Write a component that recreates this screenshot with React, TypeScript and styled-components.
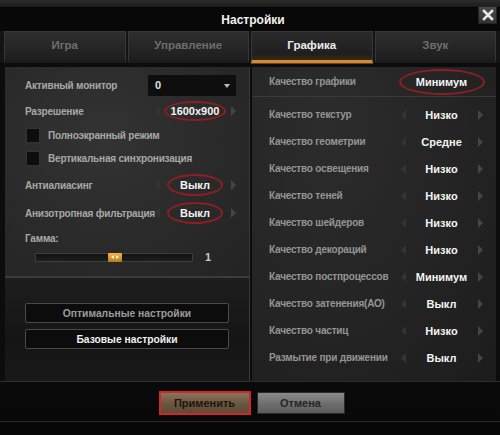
import styled, { createGlobalStyle } from 'styled-components';

const GlobalStyle = createGlobalStyle`
  html, body {
    margin: 0;
    padding: 0;
    background: #111;
  }
  * {
    box-sizing: border-box;
  }
`;

const tabs = ['Игра', 'Управление', 'Графика', 'Звук'];

const qualityRows = [
  { label: 'Качество текстур', value: 'Низко' },
  { label: 'Качество геометрии', value: 'Средне' },
  { label: 'Качество освещения', value: 'Низко' },
  { label: 'Качество теней', value: 'Низко' },
  { label: 'Качество шейдеров', value: 'Низко' },
  { label: 'Качество декораций', value: 'Низко' },
  { label: 'Качество постпроцессов', value: 'Минимум' },
  { label: 'Качество затенения(АО)', value: 'Выкл' },
  { label: 'Качество частиц', value: 'Низко' },
  { label: 'Размытие при движении', value: 'Выкл' },
];

// red marks drawn over some values (width x height of the ellipse)
type Mark = { w: number; h: number };

const Selector = ({ value, mark }: { value: string; mark?: Mark }) => (
  <ValueCell>
    <Arrow $dir="left" />
    <Value>
      {value}
      {mark && <Ring $w={mark.w} $h={mark.h} />}
    </Value>
    <Arrow $dir="right" />
  </ValueCell>
);

const App = () => {
  const gamma = 0.5;

  return (
    <>
      <GlobalStyle />
      <Window>
        <TopStrip />
        <TitleBar>
          Настройки
          <CloseButton>
            <svg width="12" height="12" viewBox="0 0 12 12">
              <path d="M2 2 L10 10 M10 2 L2 10" stroke="#e6e6e6" strokeWidth="2.6" strokeLinecap="square" />
            </svg>
          </CloseButton>
        </TitleBar>

        <TabBar>
          {tabs.map((t) => (
            <Tab key={t} $active={t === 'Графика'}>
              {t}
            </Tab>
          ))}
        </TabBar>

        <Body>
          <LeftPanel>
            <SettingsArea>
              <SettingRow>
                <Label>Активный монитор</Label>
                <Dropdown>
                  0
                  <DropArrow />
                </Dropdown>
              </SettingRow>
              <SettingRow>
                <Label>Разрешение</Label>
                <Selector value="1600x900" mark={{ w: 62, h: 20 }} />
              </SettingRow>
              <CheckRow>
                <CheckBox />
                <Label>Полноэкранный режим</Label>
              </CheckRow>
              <CheckRow>
                <CheckBox />
                <Label>Вертикальная синхронизация</Label>
              </CheckRow>
              <SettingRow $gapTop>
                <Label>Антиалиасинг</Label>
                <Selector value="Выкл" mark={{ w: 56, h: 22 }} />
              </SettingRow>
              <SettingRow $gapTop>
                <Label>Анизотропная фильтрация</Label>
                <Selector value="Выкл" mark={{ w: 56, h: 22 }} />
              </SettingRow>
              <GammaLabel>Гамма:</GammaLabel>
              <SliderRow>
                <Track>
                  <Thumb style={{ left: `${gamma * 100}%` }}>
                    <ThumbArrow $dir="left" />
                    <ThumbArrow $dir="right" />
                  </Thumb>
                </Track>
                <SliderValue>1</SliderValue>
              </SliderRow>
            </SettingsArea>
            <PresetArea>
              <PresetButton>Оптимальные настройки</PresetButton>
              <PresetButton $bright>Базовые настройки</PresetButton>
            </PresetArea>
          </LeftPanel>

          <RightPanel>
            <HeaderRow>
              <RightLabel>Качество графики</RightLabel>
              <ValueCell>
                <span />
                <Value>
                  Минимум
                  <Ring $w={86} $h={26} />
                </Value>
                <span />
              </ValueCell>
            </HeaderRow>
            <QualityList>
              {qualityRows.map((r) => (
                <QualityRow key={r.label}>
                  <RightLabel>{r.label}</RightLabel>
                  <Selector value={r.value} />
                </QualityRow>
              ))}
            </QualityList>
          </RightPanel>
        </Body>

        <Footer>
          <FooterButtons>
            <ApplyButton>Применить</ApplyButton>
            <CancelButton>Отмена</CancelButton>
          </FooterButtons>
        </Footer>
      </Window>
    </>
  );
};

export default App;

const Window = styled.div`
  width: 500px;
  height: 435px;
  display: flex;
  flex-direction: column;
  background: #0c0c0c;
  font-family: 'Liberation Sans', Arial, sans-serif;
  overflow: hidden;
`;

const TopStrip = styled.div`
  height: 8px;
  background: linear-gradient(#2e2c2a, #1c1b1a);
  border-bottom: 1px solid #050505;
`;

const TitleBar = styled.div`
  position: relative;
  height: 23px;
  display: flex;
  align-items: center;
  justify-content: center;
  padding-left: 6px;
  background: #080808;
  color: #f2f2f2;
  font-weight: 700;
  font-size: 12px;
`;

const CloseButton = styled.div`
  position: absolute;
  right: 3px;
  top: -2px;
  width: 19px;
  height: 18px;
  display: flex;
  align-items: center;
  justify-content: center;
  background: linear-gradient(#4a4a4a, #333);
  border: 1px solid #222;
`;

const TabBar = styled.div`
  display: grid;
  grid-template-columns: repeat(4, 1fr);
  gap: 2px;
  padding: 0 4px;
  height: 32px;
  background: #141414;
`;

const Tab = styled.div<{ $active?: boolean }>`
  display: flex;
  align-items: center;
  justify-content: center;
  padding-bottom: 2px;
  font-size: 11.5px;
  font-weight: 700;
  color: ${(p) => (p.$active ? '#ececec' : '#6e6e6e')};
  background: ${(p) =>
    p.$active
      ? 'linear-gradient(#2a2a2a, #1f1f1f 80%, #3a2a12 100%)'
      : 'linear-gradient(#2e2e2e, #1e1e1e)'};
  border: 1px solid #383838;
  border-bottom: 3px solid ${(p) => (p.$active ? '#d08a3a' : '#1b1b1b')};
  box-shadow: ${(p) => (p.$active ? '0 1px 0 #6b4318' : 'none')};
`;

const Body = styled.div`
  display: grid;
  grid-template-columns: 245px 1fr;
  gap: 2px;
  height: 314px;
  margin-top: 4px;
  padding: 0 4px 0 5px;
`;

const LeftPanel = styled.div`
  display: flex;
  flex-direction: column;
  border-right: 1px solid #3a3a3a;
`;

const SettingsArea = styled.div`
  height: 211px;
  display: flex;
  flex-direction: column;
  padding: 5px 0 0 20px;
  background: radial-gradient(ellipse at 40% 35%, #333 0%, #2a2a2a 55%, #232323 100%);
  border-bottom: 2px solid #3c3c3c;
`;

const SettingRow = styled.div<{ $gapTop?: boolean }>`
  height: 26px;
  margin-top: ${(p) => (p.$gapTop ? '2px' : '0')};
  display: grid;
  grid-template-columns: 128px 84px;
  align-items: center;
`;

const Label = styled.span`
  font-size: 10px;
  font-weight: 700;
  letter-spacing: -0.2px;
  color: #a8a8a8;
  white-space: nowrap;
`;

const RightLabel = styled(Label)`
  color: #959595;
`;

const Dropdown = styled.div`
  position: relative;
  height: 21px;
  width: 88px;
  margin-left: -5px;
  display: flex;
  align-items: center;
  padding-left: 7px;
  background: #0e0e0e;
  color: #e0e0e0;
  font-size: 11px;
  font-weight: 700;
`;

const DropArrow = styled.span`
  position: absolute;
  right: 6px;
  top: 9px;
  border-left: 3px solid transparent;
  border-right: 3px solid transparent;
  border-top: 4px solid #bbb;
`;

const ValueCell = styled.div`
  display: grid;
  grid-template-columns: 8px 1fr 8px;
  align-items: center;
  height: 100%;
`;

const Arrow = styled.span<{ $dir: 'left' | 'right' }>`
  justify-self: center;
  width: 0;
  height: 0;
  border-top: 5px solid transparent;
  border-bottom: 5px solid transparent;
  ${(p) =>
    p.$dir === 'left'
      ? 'border-right: 5px solid #343434;'
      : 'border-left: 5px solid #454545;'}
`;

const Value = styled.span`
  position: relative;
  display: flex;
  align-items: center;
  justify-content: center;
  height: 100%;
  font-size: 11px;
  font-weight: 700;
  color: #f4f4f4;
`;

const Ring = styled.span<{ $w: number; $h: number }>`
  position: absolute;
  left: 50%;
  top: 50%;
  width: ${(p) => p.$w}px;
  height: ${(p) => p.$h}px;
  transform: translate(-50%, -50%);
  border: 2px solid #8c1f22;
  border-radius: 50%;
`;

const CheckRow = styled.div`
  height: 23px;
  display: flex;
  align-items: center;
  gap: 8px;
  padding-left: 1px;
`;

const CheckBox = styled.span`
  width: 14px;
  height: 15px;
  background: #0d0d0d;
  border: 1px solid #333;
`;

const GammaLabel = styled(Label)`
  margin-top: 6px;
  height: 14px;
  line-height: 14px;
`;

const SliderRow = styled.div`
  height: 22px;
  display: flex;
  align-items: center;
  gap: 12px;
  padding-left: 10px;
`;

const Track = styled.div`
  position: relative;
  width: 158px;
  height: 9px;
  background: linear-gradient(#111, #1e1e1e);
  border: 1px solid #3e3e3e;
  border-radius: 1px;
`;

const Thumb = styled.div`
  position: absolute;
  top: -1px;
  width: 14px;
  height: 9px;
  margin-left: -6px;
  display: flex;
  align-items: center;
  justify-content: center;
  gap: 2px;
  background: linear-gradient(#f0b84a, #b77a1e);
  border-radius: 1px;
`;

const ThumbArrow = styled.span<{ $dir: 'left' | 'right' }>`
  width: 0;
  height: 0;
  border-top: 2px solid transparent;
  border-bottom: 2px solid transparent;
  ${(p) =>
    p.$dir === 'left' ? 'border-right: 3px solid #fff3d0;' : 'border-left: 3px solid #fff3d0;'}
`;

const SliderValue = styled.span`
  font-size: 11px;
  font-weight: 700;
  color: #c8c8c8;
`;

const PresetArea = styled.div`
  flex: 1;
  display: flex;
  flex-direction: column;
  gap: 6px;
  padding: 25px 20px 0 20px;
  background: linear-gradient(#1d1d1d, #151515 60%, #181818);
`;

const PresetButton = styled.div<{ $bright?: boolean }>`
  height: 20px;
  display: flex;
  align-items: center;
  justify-content: center;
  background: #0c0c0c;
  border: 1px solid #4a4a4a;
  border-radius: 2px;
  font-size: 10.3px;
  font-weight: 700;
  color: ${(p) => (p.$bright ? '#f0f0f0' : '#9c9c9c')};
`;

const RightPanel = styled.div`
  display: flex;
  flex-direction: column;
  padding: 0 6px 0 17px;
  background: radial-gradient(ellipse at 30% 20%, #2c2c2c 0%, #242424 55%, #1c1c1c 100%);
`;

const HeaderRow = styled.div`
  height: 30px;
  display: grid;
  grid-template-columns: 130px 85px;
  align-items: center;
  border-bottom: 1px solid #3a3a3a;
  margin-left: -17px;
  margin-right: -6px;
  padding-left: 17px;
`;

const QualityList = styled.div`
  display: flex;
  flex-direction: column;
  padding-top: 4px;
`;

const QualityRow = styled.div`
  height: 27px;
  display: grid;
  grid-template-columns: 130px 85px;
  align-items: center;
`;

const Footer = styled.div`
  flex: 1;
  display: flex;
  flex-direction: column;
  border-top: 1px solid #2e2e2e;
  background: linear-gradient(#0a0a0a, #070707);
  &::after {
    content: '';
    display: block;
    margin-top: 6px;
    height: 1px;
    background: #2c2c2c;
  }
`;

const FooterButtons = styled.div`
  display: flex;
  justify-content: center;
  align-items: center;
  gap: 6px;
  padding-top: 9px;
  padding-left: 3px;
`;

const ApplyButton = styled.div`
  width: 92px;
  height: 24px;
  display: flex;
  align-items: center;
  justify-content: center;
  background: linear-gradient(#8a735a, #6a5540 55%, #5e4a36);
  border: 2px solid #d3262b;
  font-size: 11px;
  font-weight: 700;
  color: #1e160e;
`;

const CancelButton = styled.div`
  width: 88px;
  height: 22px;
  display: flex;
  align-items: center;
  justify-content: center;
  background: linear-gradient(#8a8a8a, #6e6e6e 55%, #5c5c5c);
  border: 1px solid #2a2a2a;
  font-size: 11px;
  font-weight: 700;
  color: #262626;
`;
